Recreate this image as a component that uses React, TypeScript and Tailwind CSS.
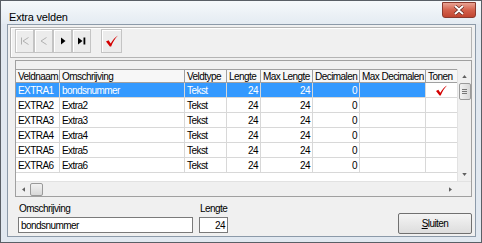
import React from "react";

type Row = {
  naam: string;
  omschrijving: string;
  type: string;
  lengte: number;
  max: number;
  dec: number;
  tonen?: boolean;
};

const rows: Row[] = [
  { naam: "EXTRA1", omschrijving: "bondsnummer", type: "Tekst", lengte: 24, max: 24, dec: 0, tonen: true },
  { naam: "EXTRA2", omschrijving: "Extra2", type: "Tekst", lengte: 24, max: 24, dec: 0 },
  { naam: "EXTRA3", omschrijving: "Extra3", type: "Tekst", lengte: 24, max: 24, dec: 0 },
  { naam: "EXTRA4", omschrijving: "Extra4", type: "Tekst", lengte: 24, max: 24, dec: 0 },
  { naam: "EXTRA5", omschrijving: "Extra5", type: "Tekst", lengte: 24, max: 24, dec: 0 },
  { naam: "EXTRA6", omschrijving: "Extra6", type: "Tekst", lengte: 24, max: 24, dec: 0 },
];

// column widths in px, left to right
const cols = [
  { label: "Veldnaam", w: "w-[44px]" },
  { label: "Omschrijving", w: "w-[125px]" },
  { label: "Veldtype", w: "w-[42px]" },
  { label: "Lengte", w: "w-[34px]" },
  { label: "Max Lengte", w: "w-[52px]" },
  { label: "Decimalen", w: "w-[47px]" },
  { label: "Max Decimalen", w: "w-[66px]" },
  { label: "Tonen", w: "w-[32px]" },
];

function RedCheck({ className = "" }: { className?: string }) {
  return (
    <svg viewBox="0 0 16 14" className={className}>
      <path d="M1 7.5 L4 6 L6.5 10 C9 5.5 11.5 2.5 15 0.5 C11.5 4 9 8 7 13.5 L5.5 13.5 Z" fill="#d40000" />
    </svg>
  );
}

function NavButton({ children }: { children: React.ReactNode }) {
  return (
    <div className="w-[19px] h-[24px] flex items-center justify-center border border-[#c4c4c4] bg-[#ececec] shadow-[inset_1px_1px_0_#ffffff]">
      {children}
    </div>
  );
}

function Cell({ w, selected, right, children }: { w: string; selected?: boolean; right?: boolean; children?: React.ReactNode }) {
  return (
    <div
      className={`${w} shrink-0 h-full border-r border-[#d8d8d8] px-[2px] flex items-center overflow-hidden whitespace-nowrap ${
        right ? "justify-end" : ""
      } ${selected ? "bg-[#3399ff] text-white" : "bg-white text-black"}`}
    >
      {children}
    </div>
  );
}

export default function App() {
  return (
    <div className="w-[482px] h-[243px] flex flex-col bg-[#e1e8f0] border border-[#5a5f66] text-[10px] tracking-[-0.55px] font-['Liberation_Sans',Arial,sans-serif] text-black overflow-hidden">
      {/* title bar */}
      <div className="h-[23px] flex items-start justify-between bg-gradient-to-b from-[#f6f9fb] to-[#e4ebf2] pl-[8px] pr-[5px] shrink-0">
        <span className="mt-[8px] text-[11px] tracking-[-0.2px]">Extra velden</span>
        <div className="mt-[1px] w-[34px] h-[16px] rounded-b-[3px] border border-[#8a3a2e] bg-gradient-to-b from-[#e8a293] via-[#d4614c] to-[#c14530] flex items-center justify-center">
          <svg viewBox="0 0 12 10" className="w-[12px] h-[10px]">
            <path d="M2 1 L6 4.5 L10 1 M2 9 L6 5.5 L10 9" stroke="#5a2018" strokeWidth="3.2" fill="none" />
            <path d="M2 1 L6 4.5 L10 1 M2 9 L6 5.5 L10 9" stroke="#ffffff" strokeWidth="2" fill="none" />
          </svg>
        </div>
      </div>

      {/* client area */}
      <div className="ml-[6px] mr-[5px] mb-[5px] flex-1 border border-[#8c9aa9] bg-[#f0f0f0] flex flex-col">
        {/* toolbar */}
        <div className="mt-[2px] ml-[2px] mr-[3px] h-[31px] border border-[#b4b4b4] shadow-[inset_1px_1px_0_#ffffff] pl-[4px] pt-[1px] flex items-start">
          <div className="flex">
            <NavButton>
              <svg viewBox="0 0 10 8" className="w-[10px] h-[8px]">
                <path d="M1.5 0.5 V7.5 M8.5 0.5 L3 4 L8.5 7.5" stroke="#b0b0b0" strokeWidth="1" fill="none" />
              </svg>
            </NavButton>
            <NavButton>
              <svg viewBox="0 0 10 8" className="w-[10px] h-[8px]">
                <path d="M7.5 0.5 L2 4 L7.5 7.5" stroke="#b0b0b0" strokeWidth="1" fill="none" />
              </svg>
            </NavButton>
            <NavButton>
              <svg viewBox="0 0 10 8" className="w-[10px] h-[8px]">
                <path d="M3 0.5 L7.5 4 L3 7.5 Z" fill="#000000" />
              </svg>
            </NavButton>
            <NavButton>
              <svg viewBox="0 0 10 8" className="w-[10px] h-[8px]">
                <path d="M1 0.5 L5.5 4 L1 7.5 Z" fill="#000000" />
                <rect x="6.5" y="0.5" width="1.8" height="7" fill="#000000" />
              </svg>
            </NavButton>
          </div>
          <div className="ml-[10px] w-[21px] h-[24px] flex items-center justify-center border border-[#c4c4c4] bg-[#ececec] shadow-[inset_1px_1px_0_#ffffff]">
            <RedCheck className="w-[14px] h-[12px]" />
          </div>
        </div>

        {/* grid */}
        <div className="mt-[2px] ml-[7px] mr-[3px] h-[137px] border border-[#a0a0a0] flex flex-col pt-[8px]">
          <div className="flex flex-1 min-h-0">
            <div className="flex-1 flex flex-col bg-white min-w-0">
              {/* header */}
              <div className="h-[14px] flex border-t border-b border-[#a0a0a0] bg-[#f7f7f7] shrink-0">
                {cols.map((c) => (
                  <div key={c.label} className={`${c.w} shrink-0 h-full border-r border-[#a0a0a0] px-[2px] flex items-center whitespace-nowrap overflow-hidden`}>
                    {c.label}
                  </div>
                ))}
              </div>
              {rows.map((r, i) => {
                const sel = i === 0;
                return (
                  <div key={r.naam} className="h-[15px] flex border-b border-[#d8d8d8] shrink-0">
                    <Cell w="w-[44px]" selected={sel}>{r.naam}</Cell>
                    <Cell w="w-[125px]" selected={sel}>{r.omschrijving}</Cell>
                    <Cell w="w-[42px]" selected={sel}>{r.type}</Cell>
                    <Cell w="w-[34px]" selected={sel} right>{r.lengte}</Cell>
                    <Cell w="w-[52px]" selected={sel} right>{r.max}</Cell>
                    <Cell w="w-[47px]" selected={sel} right>{r.dec}</Cell>
                    <Cell w="w-[66px]" selected={sel} />
                    <div className="w-[32px] shrink-0 h-full border-r border-[#d8d8d8] bg-white flex items-center justify-center">
                      {r.tonen && <RedCheck className="w-[13px] h-[11px]" />}
                    </div>
                  </div>
                );
              })}
              <div className="flex-1 bg-white" />
            </div>
            {/* vertical scrollbar */}
            <div className="w-[14px] shrink-0 bg-[#f0f0f0] border-l border-[#e2e2e2] flex flex-col items-center">
              <div className="h-[14px] flex items-center justify-center">
                <svg viewBox="0 0 6 4" className="w-[5px] h-[3px]"><path d="M0 4 L3 0 L6 4 Z" fill="#606060" /></svg>
              </div>
              <div className="w-[12px] h-[17px] rounded-[2px] border border-[#9a9a9a] bg-gradient-to-r from-[#f2f2f2] to-[#d8d8d8] flex flex-col items-center justify-center gap-[1px]">
                <div className="w-[5px] h-px bg-[#777777]" />
                <div className="w-[5px] h-px bg-[#777777]" />
                <div className="w-[5px] h-px bg-[#777777]" />
              </div>
              <div className="flex-1" />
              <div className="h-[14px] flex items-center justify-center">
                <svg viewBox="0 0 6 4" className="w-[5px] h-[3px]"><path d="M0 0 L3 4 L6 0 Z" fill="#606060" /></svg>
              </div>
            </div>
          </div>
          {/* horizontal scrollbar */}
          <div className="h-[15px] shrink-0 flex bg-[#f0f0f0] border-t border-[#e2e2e2]">
            <div className="flex-1 flex items-center">
              <div className="w-[14px] flex items-center justify-center">
                <svg viewBox="0 0 4 6" className="w-[3px] h-[5px]"><path d="M4 0 L0 3 L4 6 Z" fill="#606060" /></svg>
              </div>
              <div className="w-[13px] h-[13px] rounded-[2px] border border-[#9a9a9a] bg-gradient-to-b from-[#f2f2f2] to-[#d8d8d8]" />
              <div className="flex-1" />
              <div className="w-[14px] flex items-center justify-center">
                <svg viewBox="0 0 4 6" className="w-[3px] h-[5px]"><path d="M0 0 L4 3 L0 6 Z" fill="#606060" /></svg>
              </div>
            </div>
            <div className="w-[14px] bg-[#f0f0f0]" />
          </div>
        </div>

        {/* bottom fields */}
        <div className="flex items-end ml-[10px] mr-[3px] mt-[6px]">
          <div className="flex flex-col w-[175px]">
            <span className="leading-[12px] mb-[2px] pl-px">Omschrijving</span>
            <div className="h-[16px] border border-[#7a7a7a] bg-white px-[2px] flex items-center">bondsnummer</div>
          </div>
          <div className="flex flex-col w-[29px] ml-[6px]">
            <span className="leading-[12px] mb-[2px] pl-px">Lengte</span>
            <div className="h-[16px] border border-[#7a7a7a] bg-white px-[2px] flex items-center justify-end">24</div>
          </div>
          <div className="flex-1" />
          <div className="w-[74px] h-[21px] rounded-[2px] border border-[#707070] bg-gradient-to-b from-[#f4f4f4] to-[#dddddd] flex items-center justify-center mb-[-1px]">
            <span>
              <span className="underline">S</span>luiten
            </span>
          </div>
        </div>
      </div>
    </div>
  );
}
